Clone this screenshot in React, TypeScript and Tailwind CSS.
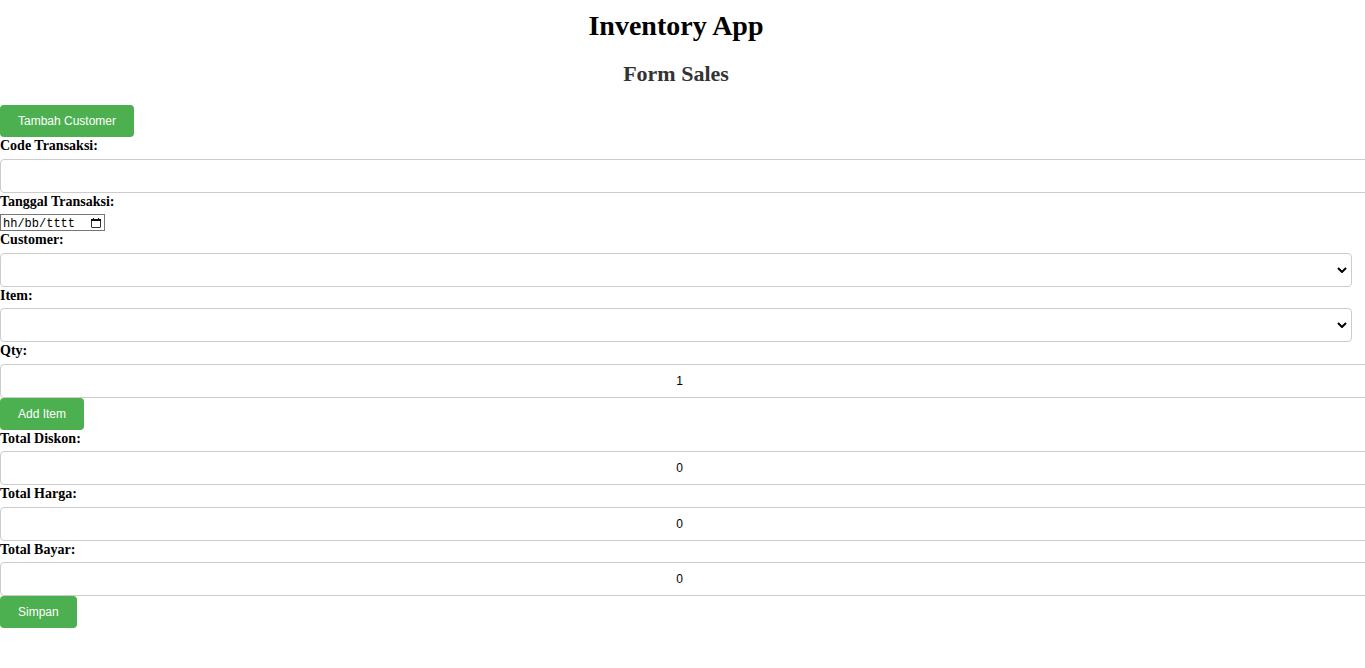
import { useState } from "react";
import type { ReactNode } from "react";

const labelClass = "mb-1 block text-sm leading-tight font-bold text-black";
const fieldClass =
  "box-content block h-4 w-full rounded border border-[#ccc] bg-white px-[10px] py-2 text-center font-['Liberation_Sans',Arial,sans-serif] text-[12px] leading-4 text-black outline-none";
const selectClass =
  "block h-[34px] w-full appearance-none rounded border border-[#ccc] bg-white px-[10px] font-['Liberation_Sans',Arial,sans-serif] text-[12px] text-black outline-none";

function Button({ children }: { children: ReactNode }) {
  return (
    <button
      type="button"
      className="block h-8 cursor-pointer rounded bg-[#4caf50] px-[18px] font-['Liberation_Sans',Arial,sans-serif] text-[12px] leading-4 text-white"
    >
      {children}
    </button>
  );
}

function TextField({ id, label }: { id: string; label: string }) {
  return (
    <div>
      <label htmlFor={id} className={labelClass}>{label}</label>
      <input id={id} type="text" className={fieldClass} />
    </div>
  );
}

function NumberField({ id, label, initial }: { id: string; label: string; initial: number }) {
  return (
    <div>
      <label htmlFor={id} className={labelClass}>{label}</label>
      <input id={id} type="number" defaultValue={initial} className={fieldClass} />
    </div>
  );
}

function DateField({ id, label }: { id: string; label: string }) {
  const [value, setValue] = useState("");
  return (
    <div>
      <label htmlFor={id} className={labelClass}>{label}</label>
      <div className="flex h-[17px] w-[105px] items-center justify-between border border-[#767676] bg-white pr-[3px] pl-[2px]">
        <input
          id={id}
          type="text"
          value={value}
          onChange={(e) => setValue(e.target.value)}
          placeholder="hh/bb/tttt"
          className="h-[15px] w-20 pt-[2px] font-['Liberation_Mono',monospace] text-[12px] leading-[13px] text-black outline-none placeholder:text-black"
        />
        <button type="button" aria-label="Pilih tanggal" className="block">
          <svg width="10" height="10" viewBox="0 0 10 10" fill="none" className="block">
            <rect x=".5" y="1.5" width="9" height="8" rx=".5" stroke="#333" />
            <path d="M0 1h10v2H0zM2 0h1v1H2zM7 0h1v1H7z" fill="#111" />
          </svg>
        </button>
      </div>
    </div>
  );
}

function SelectField({ id, label }: { id: string; label: string }) {
  return (
    <div>
      <label htmlFor={id} className={labelClass}>{label}</label>
      <div className="relative">
        <select id={id} className={selectClass} />
        <svg
          width="10"
          height="6"
          viewBox="0 0 10 6"
          fill="none"
          className="pointer-events-none absolute top-[14px] right-[5px]"
        >
          <path d="M1 1l4 4 4-4" stroke="#000" strokeWidth="2" />
        </svg>
      </div>
    </div>
  );
}

export default function App() {
  return (
    <div className="min-h-screen overflow-hidden bg-white font-['Liberation_Serif','Times_New_Roman',serif] text-black">
      <main className="mr-[13px]">
        <h1 className="pt-2 text-center text-[28px] leading-9 font-bold">Inventory App</h1>
        <h2 className="mt-4 mb-[17px] text-center text-[22px] leading-7 font-bold text-[#333]">Form Sales</h2>
        <form onSubmit={(e) => e.preventDefault()}>
          <Button>Tambah Customer</Button>
          <TextField id="code" label="Code Transaksi:" />
          <DateField id="tanggal" label="Tanggal Transaksi:" />
          <SelectField id="customer" label="Customer:" />
          <SelectField id="item" label="Item:" />
          <NumberField id="qty" label="Qty:" initial={1} />
          <Button>Add Item</Button>
          <NumberField id="diskon" label="Total Diskon:" initial={0} />
          <NumberField id="harga" label="Total Harga:" initial={0} />
          <NumberField id="bayar" label="Total Bayar:" initial={0} />
          <Button>Simpan</Button>
        </form>
      </main>
    </div>
  );
}
